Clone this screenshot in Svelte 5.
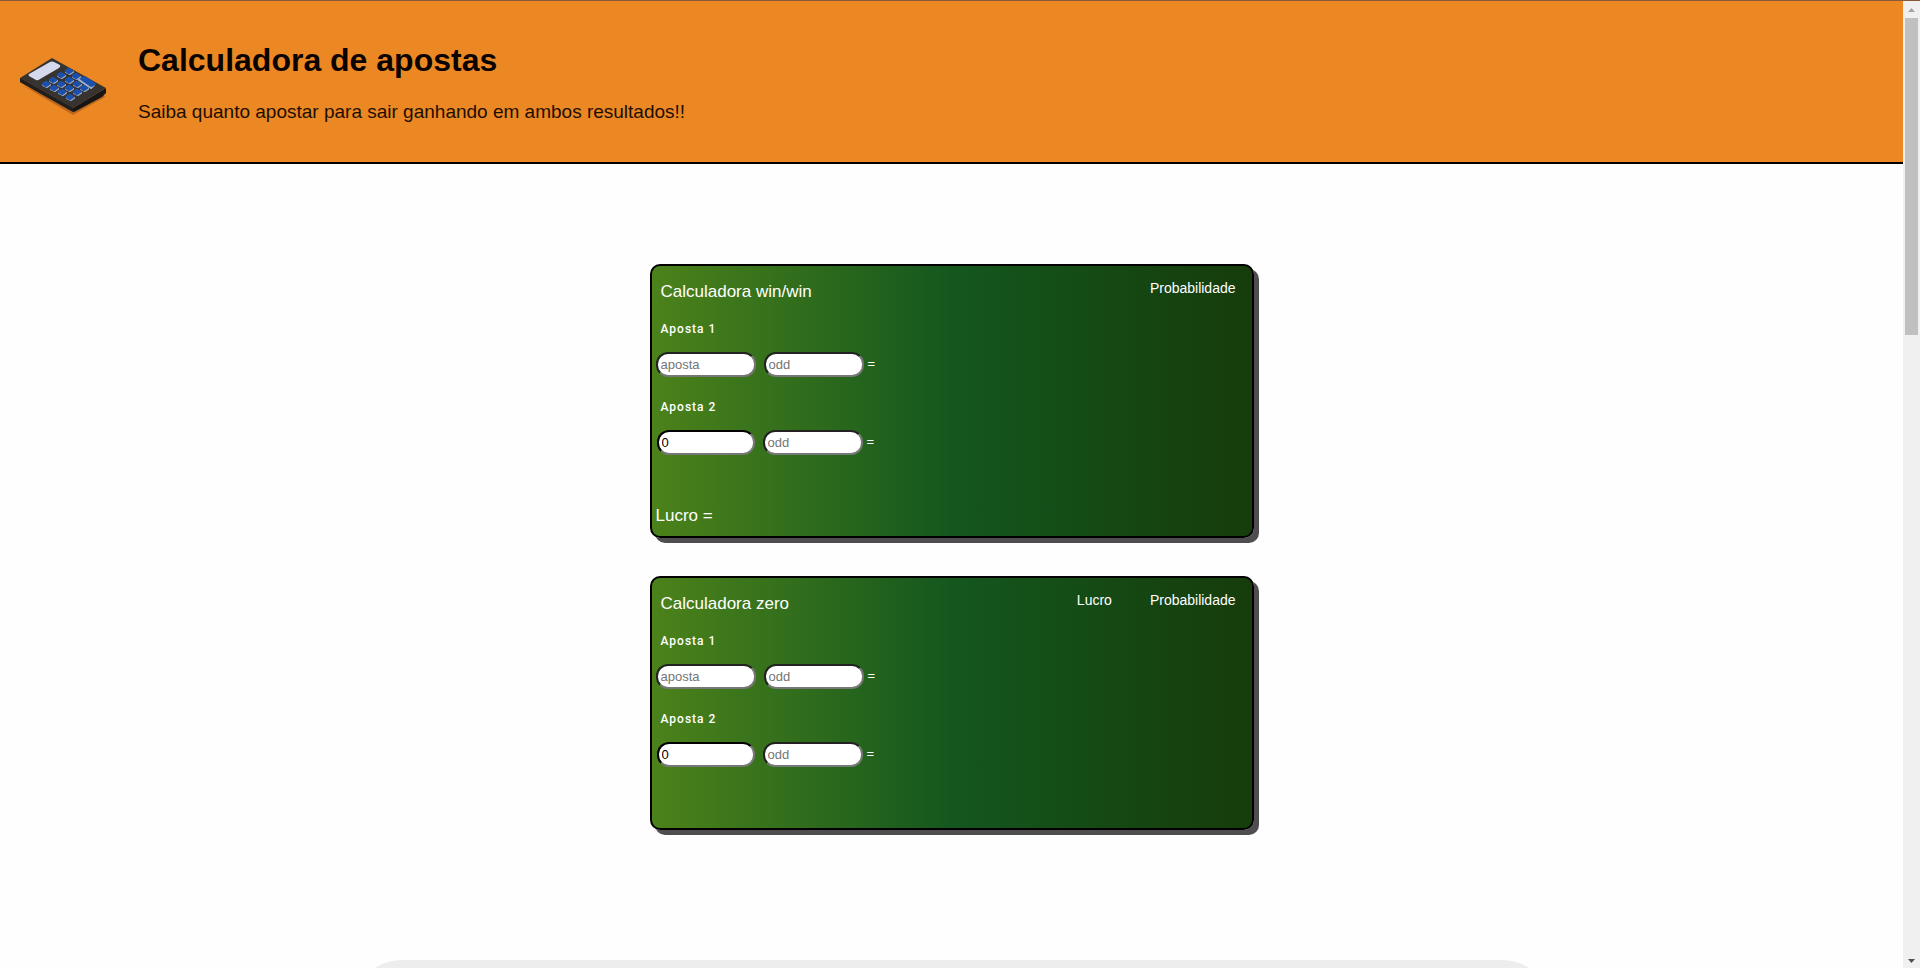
<script>
  const calculators = [
    { id: 'win', title: 'Calculadora win/win', tabs: ['Probabilidade'], profit: true },
    { id: 'zero', title: 'Calculadora zero', tabs: ['Lucro', 'Probabilidade'], profit: false }
  ];
  // Centres of the small keys on the logo's keypad
  const keys = [
    [28, 53], [35, 49], [43, 44], [51, 40],
    [36, 57], [43, 53], [51, 49], [58, 45],
    [44, 61], [51, 57], [59, 53],
    [52, 66], [59, 61], [66, 57]
  ];
</script>

<div class="page">
  <div class="content">
    <header>
      <svg class="logo" viewBox="0 0 90 90" aria-hidden="true">
        <path d="M4 54 L55 84 L87 66 L84 60 L54 75 Z" fill="#a85a1c" opacity=".7" />
        <path d="M2 47 L55 77 L88 57 V62 L84 66 L56 81 L2 51 Z" fill="#171615" />
        <path d="M2 47 L34 27 L88 57 L55 77 Z" fill="#373430" />
        <path d="M2 47 L55 77 V81 L2 51 Z" fill="#211f1d" />
        <path d="M11 43 L32 31 Q34 30 36 31 L42 34 Q43 35 41 37 L22 48 Q20 50 18 49 L11 45 Q10 44 11 43 Z" fill="#d5d9ee" />
        <g stroke-linejoin="round">
          {#each keys as [x, y]}
            <path d="M{x - 3} {y + 1} L{x} {y - 1} L{x + 4} {y + 1} L{x + 1} {y + 3} Z" fill="#a3b0c6" stroke="#a3b0c6" stroke-width="2" />
            <path d="M{x - 3} {y} L{x} {y - 2} L{x + 3} {y} L{x} {y + 2} Z" fill="#1c50ad" stroke="#1c50ad" stroke-width="2.4" />
          {/each}
          <path d="M61 49 L65 47 L76 54 L73 57 Z" fill="#a3b0c6" stroke="#a3b0c6" stroke-width="2" />
          <path d="M63 48 L67 46 L77 53 L73 55 Z" fill="#1c50ad" stroke="#1c50ad" stroke-width="2" />
        </g>
      </svg>
      <div class="heading">
        <h1>Calculadora de apostas</h1>
        <p>Saiba quanto apostar para sair ganhando em ambos resultados!!</p>
      </div>
    </header>

    <main>
      {#each calculators as calc}
        <section class="card">
          <div class="top">
            <h2>{calc.title}</h2>
            <nav>
              {#each calc.tabs as tab}<button type="button">{tab}</button>{/each}
            </nav>
          </div>
          <label for="{calc.id}-stake1">Aposta 1</label>
          <div class="bet">
            <input id="{calc.id}-stake1" type="text" placeholder="aposta" />
            <input type="text" placeholder="odd" aria-label="odd" />
            <span>=</span>
          </div>
          <label for="{calc.id}-stake2">Aposta 2</label>
          <div class="bet">
            <input id="{calc.id}-stake2" class="result" type="text" value="0" readonly />
            <input type="text" placeholder="odd" aria-label="odd" />
            <span>=</span>
          </div>
          {#if calc.profit}<p class="profit">Lucro =</p>{/if}
        </section>
      {/each}
      <div class="panel"></div>
    </main>
  </div>

  <div class="scrollbar" aria-hidden="true">
    <svg viewBox="0 0 17 17"><path d="M5 11 L8.5 7 L12 11 Z" fill="#a3a3a3" /></svg>
    <div class="track"><div class="thumb"></div></div>
    <svg viewBox="0 0 17 17"><path d="M5 8 H12 L8.5 12 Z" fill="#505050" /></svg>
  </div>
</div>

<style>
  .page {
    display: grid;
    grid-template-columns: minmax(0, 1fr) 17px;
    height: 100vh;
    overflow: hidden;
    box-sizing: border-box;
    border-top: 1px solid #87583a;
    background: #fefefe;
    font-family: Arial, "Liberation Sans", sans-serif;
  }
  .content { overflow: hidden; }
  header {
    display: flex;
    align-items: flex-start;
    gap: 30px;
    padding: 30px 18px 39px;
    background: #ec8823;
    border-bottom: 2px solid #000;
  }
  .logo { width: 90px; height: 90px; }
  .heading { padding-top: 11px; }
  h1 { margin: 0; font-size: 32px; line-height: 36px; color: #0a0300; }
  .heading p { margin: 23px 0 0; font-size: 19px; line-height: 22px; color: #1d0e02; }
  main {
    display: flex;
    flex-direction: column;
    align-items: center;
    gap: 38px;
    padding-top: 100px;
  }
  .card {
    box-sizing: border-box;
    width: 604px;
    max-width: 100%;
    min-height: 254px;
    padding: 10px 4px;
    border: 2px solid #000;
    border-radius: 10px;
    box-shadow: 5px 5px #4f4d4f;
    background: linear-gradient(90deg, #4c821a, #14571e 50%, #163c0b);
    color: #fff;
  }
  .top { display: flex; justify-content: space-between; align-items: flex-start; padding-left: 5px; }
  h2 { margin: 7px 0 0; font-size: 17px; line-height: 17px; font-weight: 400; }
  nav { display: flex; gap: 38px; padding-right: 12px; }
  button {
    margin: 0;
    padding: 0;
    border: 0;
    background: none;
    color: #fff;
    font: 14px/24px Arial, "Liberation Sans", sans-serif;
  }
  label {
    display: block;
    width: max-content;
    margin: 19px 0 13px 5px;
    font-family: Roboto, Arial, sans-serif;
    font-size: 12px;
    line-height: 20px;
    font-weight: 500;
    letter-spacing: 1px;
  }
  .bet { display: flex; align-items: flex-start; gap: 8px; padding-bottom: 1px; }
  .bet span { margin-left: -4px; font-size: 13px; line-height: 24px; }
  input {
    box-sizing: border-box;
    width: 100px;
    height: 25px;
    margin: 0;
    padding: 1px 3px;
    border: 2px solid;
    border-color: #222 #777 #777 #222;
    border-radius: 12px;
    background: #fff;
    color: #000;
    font: 13px "Liberation Sans", Arial, sans-serif;
  }
  input::placeholder { color: #757575; }
  .result { width: 98px; margin-left: 1px; border-color: #000 #777 #777 #000; }
  .profit { margin: 50px 0 0; font-size: 17px; line-height: 20px; }
  .panel {
    width: 1200px;
    max-width: 100%;
    height: 400px;
    margin-top: 92px;
    border-radius: 50px;
    background: #ededed;
  }
  .scrollbar {
    display: flex;
    flex-direction: column;
    background: #f0f0f0;
  }
  .scrollbar svg { width: 17px; height: 17px; }
  .track { flex: 1; padding: 0 2px; }
  .thumb { height: 34%; background: #c0c0c0; }
</style>
